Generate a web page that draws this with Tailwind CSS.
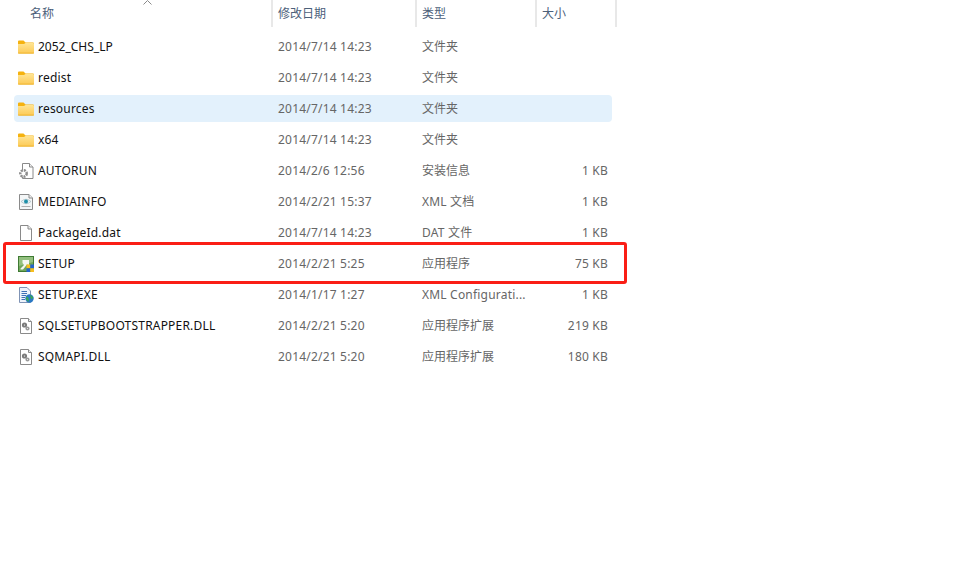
<!DOCTYPE html>
<html lang="zh-CN">
<head>
  <meta charset="UTF-8" />
  <title>SQL Server setup folder</title>
  <script src="https://cdn.jsdelivr.net/npm/@tailwindcss/browser@4"></script>
</head>
<body class="bg-white">
  <svg class="absolute h-0 w-0">
    <defs>
      <linearGradient id="folderBody" x1="0" y1="0" x2="0" y2="1">
        <stop offset="0" stop-color="#ffe493"/>
        <stop offset="1" stop-color="#fcca55"/>
      </linearGradient>
    </defs>
    <symbol id="folder" viewBox="0 0 16 14">
      <path d="M0 1.500Q0 .5 1 .5H5.500L7.500 2.500H15Q16 2.500 16 3.500V5H0Z" fill="#f5b20f"/>
      <path d="M0 4H6L7.500 3H15Q16 3 16 4V12.500Q16 13.500 15 13.500H1Q0 13.500 0 12.500Z" fill="url(#folderBody)"/>
      <path d="M0 12.800H16V13Q16 13.500 15 13.500H1Q0 13.500 0 13Z" fill="#e9a915"/>
    </symbol>
    <symbol id="page" viewBox="0 0 14 16">
      <path d="M1.500.5H9L12.500 4V15.500H1.500Z" fill="#fff" stroke="#8a8a8a"/>
      <path d="M9 .5V4H12.500" fill="#eee" stroke="#8a8a8a"/>
    </symbol>
    <symbol id="gears" viewBox="0 0 16 16">
      <path d="M2.500.5H10.500L13.500 3.500V15.500H2.500Z" fill="#fff" stroke="#8a8a8a"/>
      <path d="M10.500.5V3.500H13.500" fill="#eee" stroke="#8a8a8a"/>
      <circle cx="6.500" cy="7" r="1.600" fill="none" stroke="#7b7b7b" stroke-width="2"/>
      <circle cx="9.500" cy="10.500" r="1.300" fill="none" stroke="#9a9a9a" stroke-width="1.600"/>
    </symbol>
  </svg>

  <div class="relative h-[581px] w-[963px] overflow-hidden font-['Noto_Sans','Noto_Sans_CJK_SC',sans-serif] text-xs">
    <!-- column headers -->
    <div class="relative grid h-[27px] w-[617px] grid-cols-[271px_144px_120px_82px] text-[#4c607a]">
      <div class="pl-[30px] pt-[6px]">名称</div>
      <div class="border-l-2 border-[#e8e8e8] pl-[5px] pt-[6px]">修改日期</div>
      <div class="border-l-2 border-[#e8e8e8] pl-[5px] pt-[6px]">类型</div>
      <div class="border-x-2 border-[#e8e8e8] pl-[5px] pt-[6px]">大小</div>
      <svg class="absolute left-[143px] top-0" width="9" height="5" viewBox="0 0 9 5"><path d="M.5 4.500L4.500 .5L8.500 4.500" fill="none" stroke="#8a8a8a"/></svg>
    </div>

    <!-- file rows -->
    <div class="mt-[6px] ml-[14px] flex w-[598px] flex-col gap-1 leading-[27px] tracking-[0.2px] text-[#666]">
      <div class="grid h-[27px] grid-cols-[264px_144px_120px_70px] rounded-sm">
        <div class="flex items-center gap-1 pl-1 tracking-normal text-[#111]"><svg class="h-[14px] w-4"><use href="#folder"/></svg>2052_CHS_LP</div>
        <div>2014/7/14 14:23</div><div class="tracking-normal">文件夹</div><div></div>
      </div>
      <div class="grid h-[27px] grid-cols-[264px_144px_120px_70px] rounded-sm">
        <div class="flex items-center gap-1 pl-1 text-[#111]"><svg class="h-[14px] w-4"><use href="#folder"/></svg>redist</div>
        <div>2014/7/14 14:23</div><div class="tracking-normal">文件夹</div><div></div>
      </div>
      <div class="grid h-[27px] grid-cols-[264px_144px_120px_70px] rounded-sm bg-[#e3f1fc]">
        <div class="flex items-center gap-1 pl-1 text-[#111]"><svg class="h-[14px] w-4"><use href="#folder"/></svg>resources</div>
        <div>2014/7/14 14:23</div><div class="tracking-normal">文件夹</div><div></div>
      </div>
      <div class="grid h-[27px] grid-cols-[264px_144px_120px_70px] rounded-sm">
        <div class="flex items-center gap-1 pl-1 text-[#111]"><svg class="h-[14px] w-4"><use href="#folder"/></svg>x64</div>
        <div>2014/7/14 14:23</div><div class="tracking-normal">文件夹</div><div></div>
      </div>
      <div class="grid h-[27px] grid-cols-[264px_144px_120px_70px] rounded-sm">
        <div class="flex items-center gap-1 pl-1 text-[#111]"><svg class="h-4 w-4" viewBox="0 0 16 16"><path d="M4.500.5H11.500L15 4V15.500H4.500Z" fill="#fff" stroke="#8a8a8a"/><path d="M11.500.5V4H15" fill="#eee" stroke="#8a8a8a"/><circle cx="5.500" cy="10.500" r="3.200" fill="#fff" stroke="#8d8d8d" stroke-width="2.500" stroke-dasharray="2 1"/><circle cx="5.500" cy="10.500" r="1" fill="#fff"/></svg>AUTORUN</div>
        <div>2014/2/6 12:56</div><div class="tracking-normal">安装信息</div><div class="pr-1 text-right">1 KB</div>
      </div>
      <div class="grid h-[27px] grid-cols-[264px_144px_120px_70px] rounded-sm">
        <div class="flex items-center gap-1 pl-1 text-[#111]"><svg class="h-4 w-4" viewBox="0 0 16 16"><path d="M1.500.5H11L14.500 4V15.500H1.500Z" fill="#f4f6f7" stroke="#8a8a8a"/><path d="M11 .5V4H14.500" fill="#eee" stroke="#8a8a8a"/><path d="M3 7.500Q8 3 13 7.500Q8 12 3 7.500Z" fill="#e3f1f5" stroke="#9fb4bb" stroke-width=".6"/><circle cx="8" cy="7.500" r="2" fill="#1f8fa8"/><path d="M3.500 12.500H12.500" stroke="#b0b0b0"/></svg>MEDIAINFO</div>
        <div>2014/2/21 15:37</div><div>XML 文档</div><div class="pr-1 text-right">1 KB</div>
      </div>
      <div class="grid h-[27px] grid-cols-[264px_144px_120px_70px] rounded-sm">
        <div class="flex items-center gap-1 pl-1 text-[#111]"><svg class="h-4 w-4" viewBox="0 0 14 16"><use href="#page"/></svg>PackageId.dat</div>
        <div>2014/7/14 14:23</div><div>DAT 文件</div><div class="pr-1 text-right">1 KB</div>
      </div>
      <div class="grid h-[27px] grid-cols-[264px_144px_120px_70px] rounded-sm">
        <div class="flex items-center gap-1 pl-1 text-[#111]"><svg class="h-4 w-4" viewBox="0 0 16 16"><rect x=".5" y=".5" width="15" height="15" fill="#6fa65a" stroke="#3f7a33"/><path d="M1 1H15V6L1 10Z" fill="#93c07f"/><path d="M2.500 12.500L6 9L4.500 7V4H11V9L9 8.500L5 13.500H2.500Z" fill="#f4f6f1"/><rect x="8.500" y="8.500" width="3.800" height="3.800" fill="#f7bd1e"/><rect x="12.300" y="8.500" width="3.700" height="3.800" fill="#2563c9"/><rect x="8.500" y="12.300" width="3.800" height="3.700" fill="#2563c9"/><rect x="12.300" y="12.300" width="3.700" height="3.700" fill="#f7bd1e"/></svg>SETUP</div>
        <div>2014/2/21 5:25</div><div class="tracking-normal">应用程序</div><div class="pr-1 text-right">75 KB</div>
      </div>
      <div class="grid h-[27px] grid-cols-[264px_144px_120px_70px] rounded-sm">
        <div class="flex items-center gap-1 pl-1 text-[#111]"><svg class="h-4 w-4" viewBox="0 0 16 16"><path d="M1.500.5H9L12.500 4V15.500H1.500Z" fill="#eef3fb" stroke="#7f93b5"/><path d="M3.500 4.500H9M3.500 6.500H9M3.500 8.500H8M3.500 10.500H7M3.500 12.500H7" stroke="#3f6fb5"/><circle cx="11.500" cy="11.500" r="4.200" fill="#2a78c4"/><path d="M8.500 9.500Q11.500 10 10.500 15L8 12.500ZM12 7.500L15.500 10.500L13 12.500Z" fill="#3aa655"/></svg>SETUP.EXE</div>
        <div>2014/1/17 1:27</div><div>XML Configurati...</div><div class="pr-1 text-right">1 KB</div>
      </div>
      <div class="grid h-[27px] grid-cols-[264px_144px_120px_70px] rounded-sm">
        <div class="flex items-center gap-1 pl-1 text-[#111]"><svg class="h-4 w-4"><use href="#gears"/></svg>SQLSETUPBOOTSTRAPPER.DLL</div>
        <div>2014/2/21 5:20</div><div class="tracking-normal">应用程序扩展</div><div class="pr-1 text-right">219 KB</div>
      </div>
      <div class="grid h-[27px] grid-cols-[264px_144px_120px_70px] rounded-sm">
        <div class="flex items-center gap-1 pl-1 text-[#111]"><svg class="h-4 w-4"><use href="#gears"/></svg>SQMAPI.DLL</div>
        <div>2014/2/21 5:20</div><div class="tracking-normal">应用程序扩展</div><div class="pr-1 text-right">180 KB</div>
      </div>
    </div>

    <!-- red annotation drawn over the screenshot -->
    <div class="absolute left-[3px] top-[242px] h-[42px] w-[624px] rounded-[3px] border-[3px] border-[#fa1e16]"></div>
  </div>
</body>
</html>
